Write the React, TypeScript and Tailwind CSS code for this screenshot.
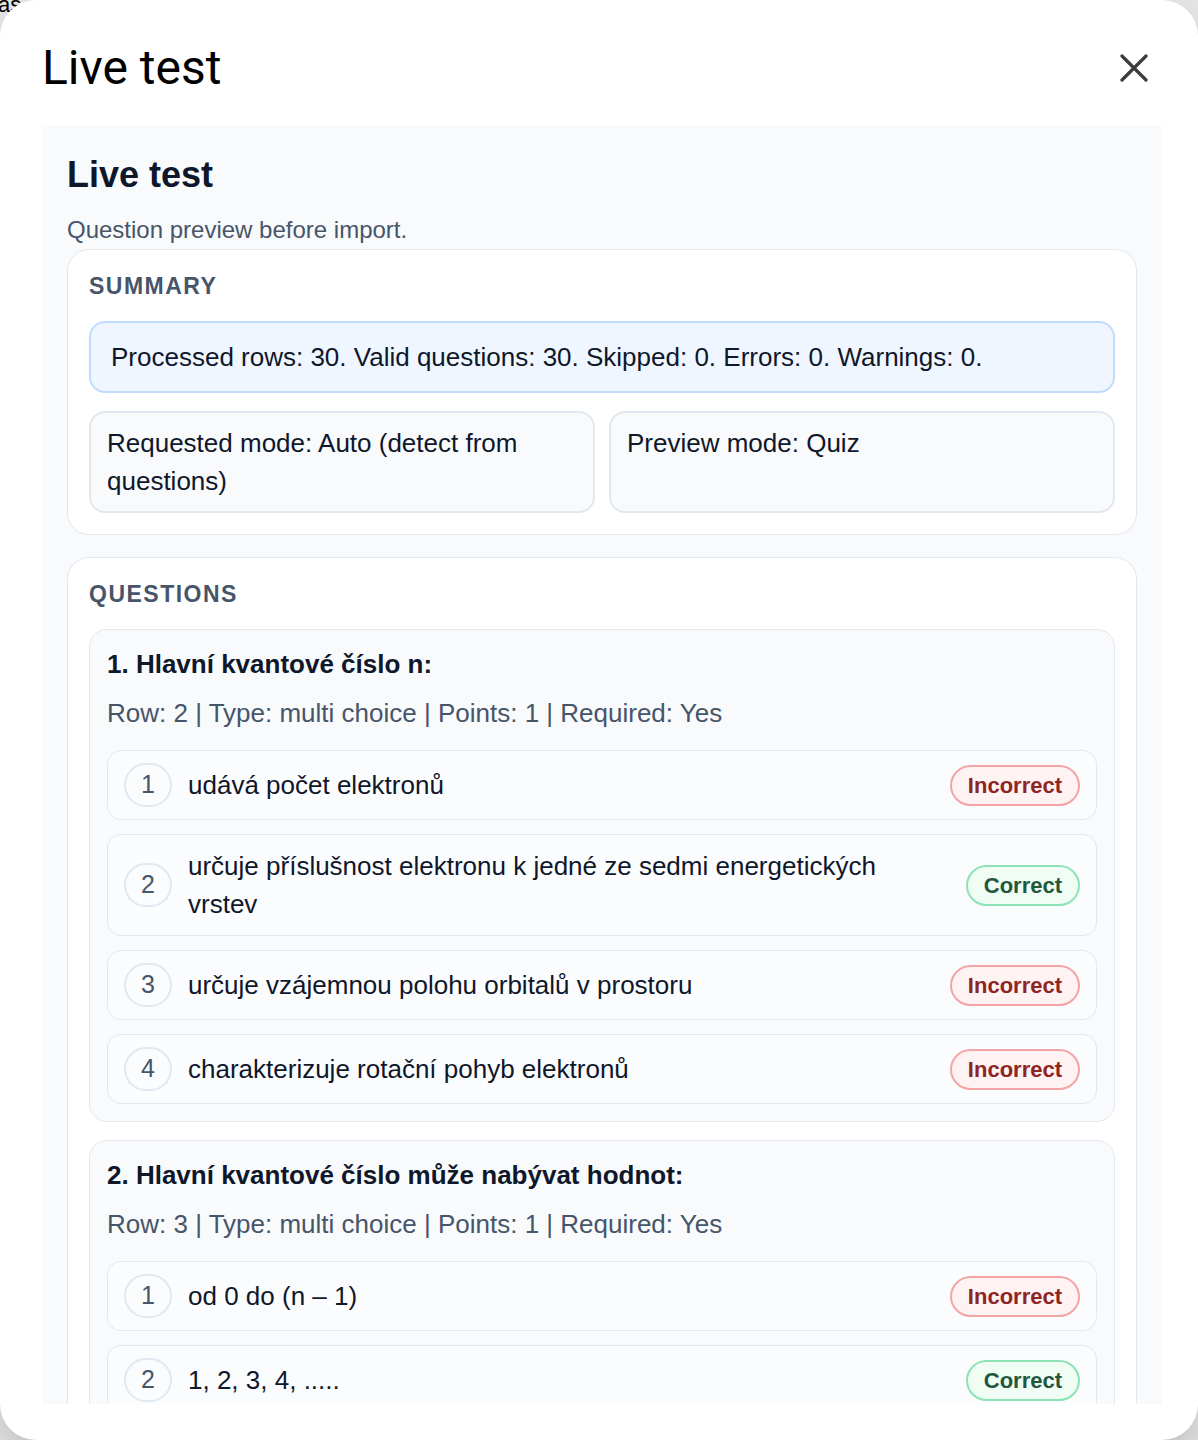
import React from 'react';

type Answer = { text: string; correct: boolean };
type Question = { title: string; meta: string; answers: Answer[] };

const questions: Question[] = [
  {
    title: '1. Hlavní kvantové číslo n:',
    meta: 'Row: 2 | Type: multi choice | Points: 1 | Required: Yes',
    answers: [
      { text: 'udává počet elektronů', correct: false },
      { text: 'určuje příslušnost elektronu k jedné ze sedmi energetických vrstev', correct: true },
      { text: 'určuje vzájemnou polohu orbitalů v prostoru', correct: false },
      { text: 'charakterizuje rotační pohyb elektronů', correct: false },
    ],
  },
  {
    title: '2. Hlavní kvantové číslo může nabývat hodnot:',
    meta: 'Row: 3 | Type: multi choice | Points: 1 | Required: Yes',
    answers: [
      { text: 'od 0 do (n – 1)', correct: false },
      { text: '1, 2, 3, 4, .....', correct: true },
    ],
  },
];

// status pill on the right of each answer
const Badge: React.FC<{ correct: boolean }> = ({ correct }) =>
  correct ? (
    <span className="shrink-0 rounded-full border-2 border-[#8ce3b5] bg-[#f0fdf5] px-4 py-[2px] text-[22px] font-bold leading-[33px] text-[#22573d]">
      Correct
    </span>
  ) : (
    <span className="shrink-0 rounded-full border-2 border-[#f3a5a5] bg-[#fef2f2] px-4 py-[2px] text-[22px] font-bold leading-[33px] text-[#8f2424]">
      Incorrect
    </span>
  );

const AnswerRow: React.FC<{ index: number; answer: Answer }> = ({ index, answer }) => (
  <div className="flex items-center gap-4 rounded-[14px] border border-[#e2e8f0] bg-[#fbfcfe] px-4 py-3">
    <span className="flex h-[44px] w-[48px] shrink-0 items-center justify-center rounded-full border-2 border-[#e2e8f0] text-[25px] text-[#475569]">
      {index}
    </span>
    <span className="flex-1 text-[26px] leading-[38px] text-[#0f172a]">{answer.text}</span>
    <Badge correct={answer.correct} />
  </div>
);

const QuestionCard: React.FC<{ q: Question }> = ({ q }) => (
  <div className="rounded-[18px] border border-[#e2e8f0] bg-[#f8fafc] px-[17px] pb-[17px] pt-[15px]">
    <h4 className="text-[26px] font-bold leading-[38px] text-[#0f172a]">{q.title}</h4>
    <p className="mb-[18px] mt-[11px] text-[26px] leading-[38px] text-[#475569]">{q.meta}</p>
    <div className="flex flex-col gap-[14px]">
      {q.answers.map((a, i) => (
        <AnswerRow key={i} index={i + 1} answer={a} />
      ))}
    </div>
  </div>
);

const SectionLabel: React.FC<{ children: React.ReactNode }> = ({ children }) => (
  <h3 className="text-[23px] font-bold uppercase leading-[34px] tracking-[0.065em] text-[#475569]">{children}</h3>
);

export default function App() {
  return (
    <div
      className="relative h-[1440px] w-[1198px] overflow-hidden bg-[#e4e4e4]"
      style={{ fontFamily: '"Liberation Sans", Arial, sans-serif' }}
    >
      {/* bit of the page behind the dialog */}
      <span className="absolute -left-[2px] -top-[12px] text-[22px] text-black">as</span>

      <div className="relative z-10 flex h-full w-full flex-col rounded-[36px] bg-white pb-[36px] shadow-2xl">
        {/* header */}
        <div className="flex h-[125px] shrink-0 items-center justify-between pl-[42px] pr-[50px] pt-[11px]">
          <h1 className="text-[48px] leading-none text-black" style={{ fontFamily: 'Roboto, sans-serif' }}>
            Live test
          </h1>
          <button className="text-[#3c3c3c]" aria-label="Close">
            <svg width="28" height="28" viewBox="0 0 28 28" fill="none" stroke="currentColor" strokeWidth="3.2" strokeLinecap="round">
              <path d="M2 2 26 26M26 2 2 26" />
            </svg>
          </button>
        </div>

        {/* scroll area */}
        <div className="ml-[42px] mr-[36px] flex-1 overflow-hidden bg-[#f8fafc] px-[25px] pt-[28px]">
          <h2 className="text-[36px] font-bold leading-[43px] text-[#0f172a]">Live test</h2>
          <p className="mt-[15px] text-[24px] leading-[38px] text-[#475569]">Question preview before import.</p>

          <div className="flex flex-col gap-[22px]">
            {/* summary */}
            <section className="flex flex-col gap-[18px] rounded-[22px] border border-[#e2e8f0] bg-white px-[21px] pb-[21px] pt-[19px]">
              <SectionLabel>Summary</SectionLabel>
              <div className="rounded-[16px] border-2 border-[#bfdbfe] bg-[#eff6ff] px-[20px] py-[15px] text-[26px] leading-[38px] text-[#0f172a]">
                Processed rows: 30. Valid questions: 30. Skipped: 0. Errors: 0. Warnings: 0.
              </div>
              <div className="grid grid-cols-2 gap-[14px]">
                <div className="rounded-[16px] border-2 border-[#e2e8f0] bg-[#f8fafc] px-4 py-[11px] text-[26px] leading-[38px] text-[#0f172a]">
                  Requested mode: Auto (detect from questions)
                </div>
                <div className="rounded-[16px] border-2 border-[#e2e8f0] bg-[#f8fafc] px-4 py-[11px] text-[26px] leading-[38px] text-[#0f172a]">
                  Preview mode: Quiz
                </div>
              </div>
            </section>

            {/* questions */}
            <section className="flex flex-col gap-[18px] rounded-[22px] border border-[#e2e8f0] bg-white px-[21px] pb-[21px] pt-[19px]">
              <SectionLabel>Questions</SectionLabel>
              {questions.map((q, i) => (
                <QuestionCard key={i} q={q} />
              ))}
            </section>
          </div>
        </div>
      </div>
    </div>
  );
}
